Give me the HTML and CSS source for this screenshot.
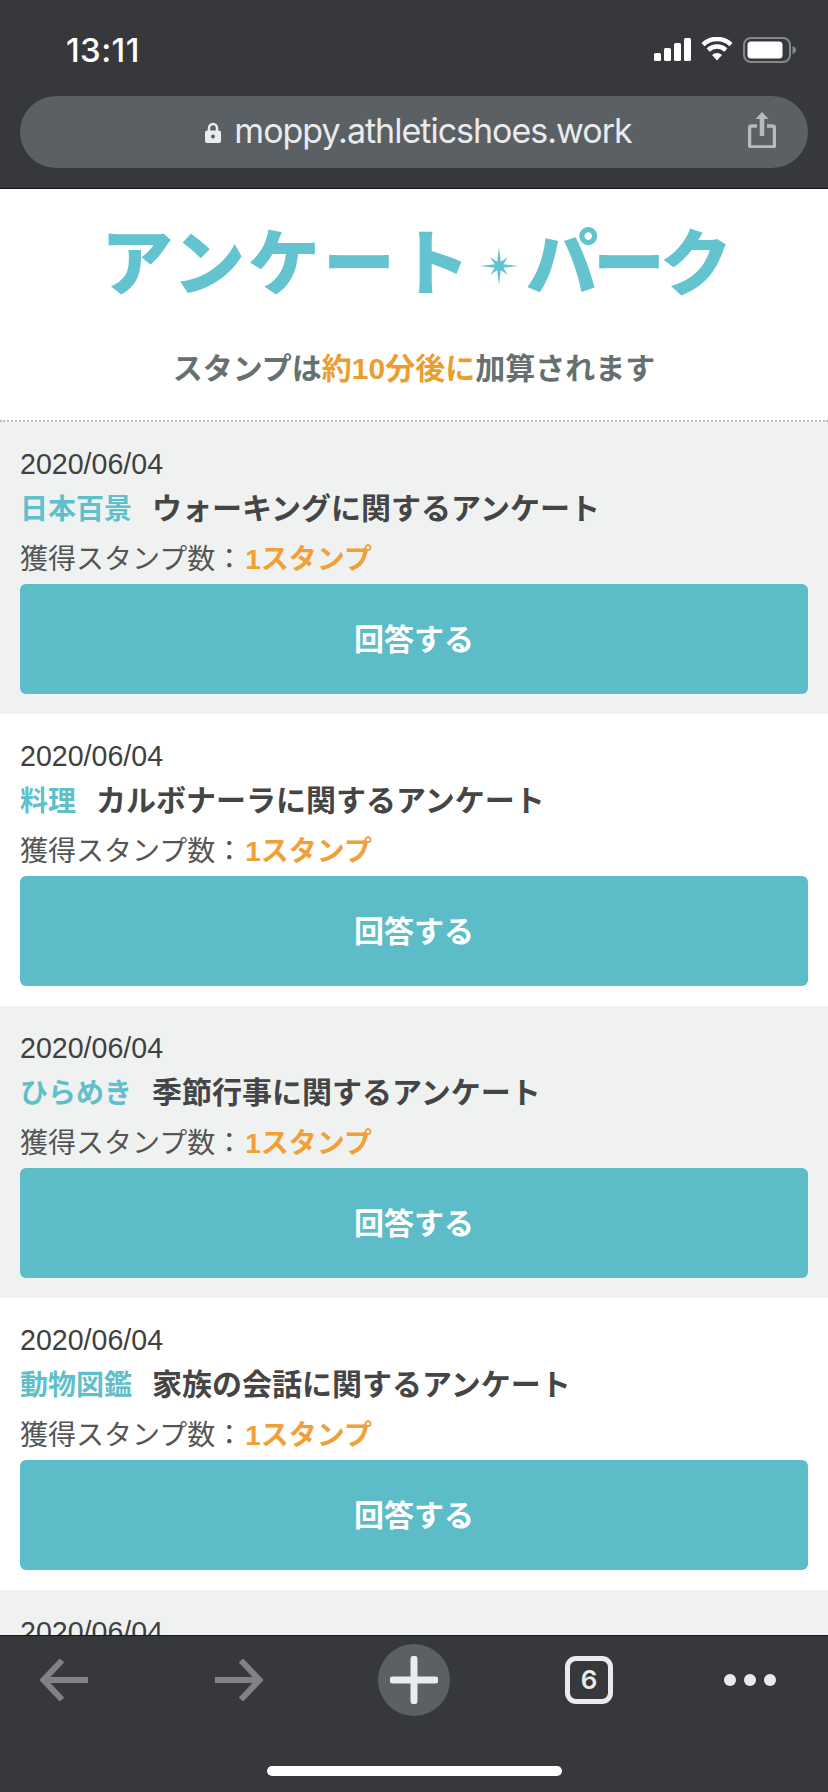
FILE: index.html
```html
<!DOCTYPE html>
<html lang="ja">
<head>
<meta charset="utf-8">
<title>アンケートパーク</title>
<link rel="stylesheet" href="styles.css">
</head>
<body>
<div class="phone">
  <header class="chrome-top">
    <div class="status">
      <span class="time">13:11</span>
      <div class="status-icons">
        <svg class="ic-signal" viewBox="0 0 37 23"><rect x="0" y="15" width="7" height="8" rx="1.5"/><rect x="10" y="10" width="7" height="13" rx="1.5"/><rect x="20" y="5" width="7" height="18" rx="1.5"/><rect x="30" y="0" width="7" height="23" rx="1.5"/></svg>
        <svg class="ic-wifi" viewBox="0 0 32 24"><path d="M16 23.5l-5-5.6a7.4 7.4 0 0 1 10 0z"/><path class="arc" d="M7.2 13.2a12.6 12.6 0 0 1 17.6 0"/><path class="arc" d="M2 7.6a20.2 20.2 0 0 1 28 0"/></svg>
        <svg class="ic-batt" viewBox="0 0 53 26"><rect class="batt-frame" x="1" y="1" width="46" height="24" rx="7"/><rect x="4.500" y="4.500" width="35" height="17" rx="3.500" class="batt-fill"/><path class="batt-nub" d="M49.500 9c2.500.8 3.500 2.300 3.500 4s-1 3.200-3.500 4z"/></svg>
      </div>
    </div>
    <div class="urlbar">
      <div class="url">
        <svg class="ic-lock" viewBox="0 0 16 21"><path class="shackle" d="M4 10V6a4 4 0 0 1 8 0v4"/><path d="M2 8.500h12a2 2 0 0 1 2 2V19a2 2 0 0 1-2 2H2a2 2 0 0 1-2-2v-8.500a2 2 0 0 1 2-2z"/><circle class="keyhole" cx="8" cy="14.500" r="2"/></svg>
        <span>moppy.athleticshoes.work</span>
      </div>
      <svg class="ic-share" viewBox="0 0 28 36"><path class="share-line" d="M9 14H3.500a2 2 0 0 0-2 2v17a2 2 0 0 0 2 2h21a2 2 0 0 0 2-2V16a2 2 0 0 0-2-2H19"/><path class="share-stem" d="M14 24V3"/><path class="share-head" d="M14 0l6.500 7h-13z"/></svg>
    </div>
  </header>

  <main class="content">
    <section class="intro">
      <div class="logo">
        <span class="logo-a">アンケート</span>
        <svg class="logo-star" viewBox="0 0 40 40"><polygon points="20,0 21.900,15.400 29.200,10.800 24.600,18.100 40,20 24.600,21.900 29.200,29.200 21.900,24.600 20,40 18.100,24.600 10.800,29.200 15.400,21.900 0,20 15.400,18.100 10.800,10.800 18.100,15.400"/></svg>
        <span class="logo-b">パーク</span>
      </div>
      <p class="notice">スタンプは<em>約10分後に</em>加算されます</p>
    </section>

    <article class="item alt">
      <div class="date">2020/06/04</div>
      <div class="title"><span class="tag">日本百景</span>ウォーキングに関するアンケート</div>
      <div class="stamps">獲得スタンプ数：<strong>1スタンプ</strong></div>
      <a class="answer">回答する</a>
    </article>
    <article class="item">
      <div class="date">2020/06/04</div>
      <div class="title"><span class="tag">料理</span>カルボナーラに関するアンケート</div>
      <div class="stamps">獲得スタンプ数：<strong>1スタンプ</strong></div>
      <a class="answer">回答する</a>
    </article>
    <article class="item alt">
      <div class="date">2020/06/04</div>
      <div class="title"><span class="tag">ひらめき</span>季節行事に関するアンケート</div>
      <div class="stamps">獲得スタンプ数：<strong>1スタンプ</strong></div>
      <a class="answer">回答する</a>
    </article>
    <article class="item">
      <div class="date">2020/06/04</div>
      <div class="title"><span class="tag">動物図鑑</span>家族の会話に関するアンケート</div>
      <div class="stamps">獲得スタンプ数：<strong>1スタンプ</strong></div>
      <a class="answer">回答する</a>
    </article>
    <article class="item alt">
      <div class="date">2020/06/04</div>
    </article>
  </main>

  <footer class="chrome-bottom">
    <nav class="toolbar">
      <span class="slot"><svg class="ic-nav" viewBox="0 0 48 42"><path d="M48 21H4M22 1.500L3.500 21 22 40.500"/></svg></span>
      <span class="slot"><svg class="ic-nav" viewBox="0 0 48 42"><path d="M0 21h44M26 1.500L44.500 21 26 40.500"/></svg></span>
      <span class="slot plus-wrap"><svg class="ic-plus" viewBox="0 0 48 48"><path d="M24 3v42M3 24h42"/></svg></span>
      <span class="slot"><span class="tabs">6</span></span>
      <span class="slot dots"><i></i><i></i><i></i></span>
    </nav>
    <div class="home"></div>
  </footer>
</div>
</body>
</html>
```
FILE: styles.css
```css
* { box-sizing: border-box; }
html, body { margin: 0; padding: 0; }
body { background: #fff; font-family: "Liberation Sans", "Noto Sans CJK JP", sans-serif; }

.phone { width: 828px; height: 1792px; display: flex; flex-direction: column; overflow: hidden; }

/* top browser chrome */
.chrome-top { flex: none; height: 189px; background: #36383b; border-bottom: 1px solid #15161a; padding: 37px 20px 0; }
.status { height: 59px; display: flex; justify-content: space-between; align-items: flex-start; padding-left: 46px; }
.time { font-family: Inter, "Liberation Sans", sans-serif; font-size: 33px; font-weight: 500; line-height: 26px; letter-spacing: 0.4px; color: #fff; }
.status-icons { display: flex; align-items: flex-start; margin-right: 12px; }
.ic-signal { width: 37px; height: 23px; margin-top: 1px; fill: #fff; }
.ic-wifi { width: 32px; height: 24px; margin: 0 0 0 10px; fill: #fff; }
.ic-wifi .arc { fill: none; stroke: #fff; stroke-width: 4.500; }
.ic-batt { width: 53px; height: 26px; margin-left: 10px; }
.batt-frame { fill: none; stroke: #85888b; stroke-width: 2; }
.batt-fill { fill: #fff; }
.batt-nub { fill: #85888b; }

.urlbar { height: 72px; border-radius: 36px; background: #5b6065; display: flex; align-items: center; justify-content: center; position: relative; }
.url { display: flex; align-items: center; gap: 13px; color: #e9ebed; font-size: 34px; line-height: 40px; font-family: Inter, "Liberation Sans", sans-serif; letter-spacing: -1px; margin-left: 9px; margin-top: -2px; }
.ic-lock { width: 16px; height: 21px; fill: #e9ebed; margin-top: 3px; }
.ic-lock .shackle { fill: none; stroke: #e9ebed; stroke-width: 2.500; }
.ic-lock .keyhole { fill: #5b6065; }
.ic-share { position: absolute; right: 32px; top: 16px; width: 28px; height: 36px; }
.share-line { fill: none; stroke: #b7babd; stroke-width: 3.500; }
.share-stem { fill: none; stroke: #b7babd; stroke-width: 4.500; }
.share-head { fill: #b7babd; }

/* page */
.content { flex: 1; min-height: 0; overflow: hidden; background: #fff; }
.intro { height: 233px; border-bottom: 2px dotted #b9bcbc; padding-top: 26px; }
.logo { height: 86px; display: flex; align-items: center; justify-content: center; color: #63c4d0; font-family: "Noto Sans CJK JP", sans-serif; font-weight: 900; font-size: 72px; line-height: 86px; }
.logo-a { letter-spacing: 3px; }
.logo-b { letter-spacing: -5px; }
.logo-star { width: 38px; height: 38px; margin: 16px 8px 0 7px; fill: #63c4d0; }
.notice { margin: 48px 0 0; text-align: center; font-size: 30px; line-height: 40px; font-weight: 700; color: #667070; }
.notice em { font-style: normal; color: #ea9e30; }

.item { height: 292px; padding: 23px 20px 0; background: #fff; color: #404040; }
.item.alt { background: #f0f2f1; }
.date { font-size: 28.600px; line-height: 38px; color: #404040; }
.title { font-size: 30px; line-height: 52px; font-weight: 700; color: #454545; white-space: nowrap; }
.tag { font-size: 28px; color: #5fbfca; margin-right: 20px; font-weight: 700; }
.stamps { font-size: 28px; line-height: 48px; color: #555; white-space: nowrap; }
.stamps strong { color: #f0a037; font-weight: 700; margin-left: 2px; }
.answer { display: flex; align-items: center; justify-content: center; height: 110px; padding-bottom: 4px; border-radius: 6px; background: #5cbcc7; color: #fff; font-size: 30px; font-weight: 700; }

/* bottom browser chrome */
.chrome-bottom { flex: none; height: 157px; background: #36383b; border-top: 1px solid #15161a; padding-top: 8px; }
.toolbar { display: flex; align-items: center; gap: 103px; padding-left: 28px; height: 72px; }
.slot { flex: none; width: 72px; height: 72px; display: flex; align-items: center; justify-content: center; }
.ic-nav { width: 48px; height: 42px; fill: none; stroke: #818284; stroke-width: 6; }
.plus-wrap { border-radius: 50%; background: #5b6065; }
.ic-plus { width: 48px; height: 48px; fill: none; stroke: #e9ebed; stroke-width: 7; stroke-linecap: round; }
.tabs { width: 48px; height: 48px; border: 5px solid #e9ebed; border-radius: 11px; color: #e9ebed; font-family: Inter, "Liberation Sans", sans-serif; font-weight: 600; font-size: 26px; line-height: 38px; text-align: center; }
.dots { gap: 8px; margin-left: -14px; }
.dots i { width: 12px; height: 12px; border-radius: 50%; background: #e9ebed; }
.home { width: 295px; height: 10px; margin: 50px auto 0; border-radius: 5px; background: #fff; }
```
